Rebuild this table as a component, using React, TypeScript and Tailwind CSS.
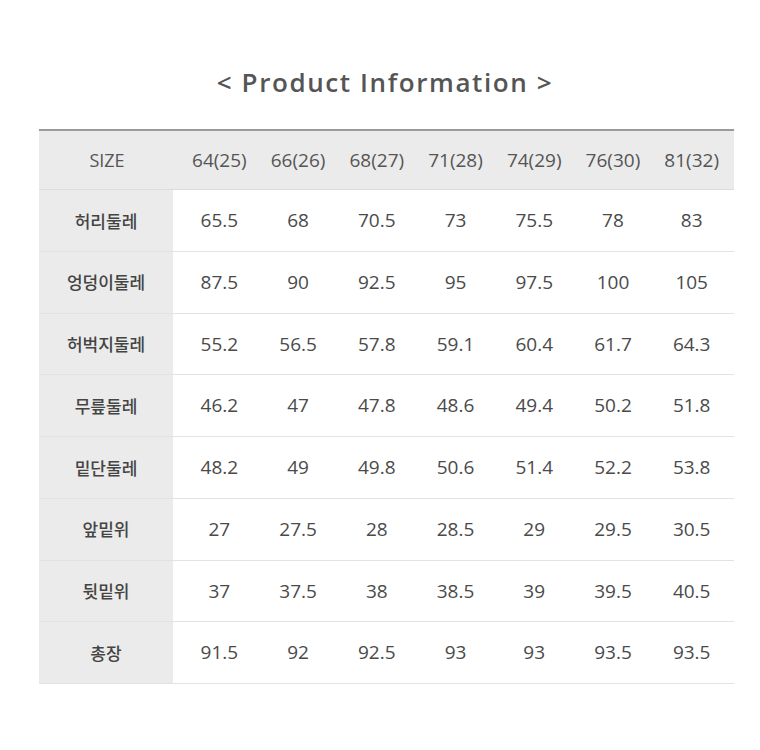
import React from "react";

const headers = ["64(25)", "66(26)", "68(27)", "71(28)", "74(29)", "76(30)", "81(32)"];
const rows: [string, string[]][] = [
  ["허리둘레", ["65.5", "68", "70.5", "73", "75.5", "78", "83"]],
  ["엉덩이둘레", ["87.5", "90", "92.5", "95", "97.5", "100", "105"]],
  ["허벅지둘레", ["55.2", "56.5", "57.8", "59.1", "60.4", "61.7", "64.3"]],
  ["무릎둘레", ["46.2", "47", "47.8", "48.6", "49.4", "50.2", "51.8"]],
  ["밑단둘레", ["48.2", "49", "49.8", "50.6", "51.4", "52.2", "53.8"]],
  ["앞밑위", ["27", "27.5", "28", "28.5", "29", "29.5", "30.5"]],
  ["뒷밑위", ["37", "37.5", "38", "38.5", "39", "39.5", "40.5"]],
  ["총장", ["91.5", "92", "92.5", "93", "93", "93.5", "93.5"]],
];

export default function App() {
  return (
    <div
      className="w-[760px] h-[750px] bg-white"
      style={{ fontFamily: '"Open Sans", "Noto Sans", "Noto Sans CJK KR", sans-serif' }}
    >
      <div className="h-[129px] flex items-start justify-center pt-[62px] pl-[10px]">
        <h1 className="text-[26px] leading-[40px] font-semibold text-[#555] tracking-[1.6px]">
          &lt; Product Information &gt;
        </h1>
      </div>
      <div className="ml-[39px] w-[695px] border-t-2 border-[#9a9a9a]">
        <div className="flex h-[59px] bg-[#ebebeb] border-b border-[#dcdcdc] text-[#555]">
          <div className="w-[134px] flex items-center justify-center text-[18px] pl-[2px]">SIZE</div>
          <div className="flex-1 flex pl-[7px] pr-[3px]">
            {headers.map((h) => (
              <div key={h} className="flex-1 flex items-center justify-center text-[19px]">
                {h}
              </div>
            ))}
          </div>
        </div>
        {rows.map(([label, vals]) => (
          <div key={label} className="flex h-[61.75px] border-b border-[#e2e2e2]">
            <div
              className="w-[134px] bg-[#ebebeb] flex items-center justify-center text-[17px] font-medium text-[#444]"
              style={{ fontFamily: '"Noto Sans CJK KR", sans-serif' }}
            >
              {label}
            </div>
            <div className="flex-1 flex pl-[7px] pr-[3px]">
              {vals.map((v, i) => (
                <div
                  key={i}
                  className="flex-1 flex items-center justify-center text-[19px] text-[#4a4a4a]"
                >
                  {v}
                </div>
              ))}
            </div>
          </div>
        ))}
      </div>
    </div>
  );
}
